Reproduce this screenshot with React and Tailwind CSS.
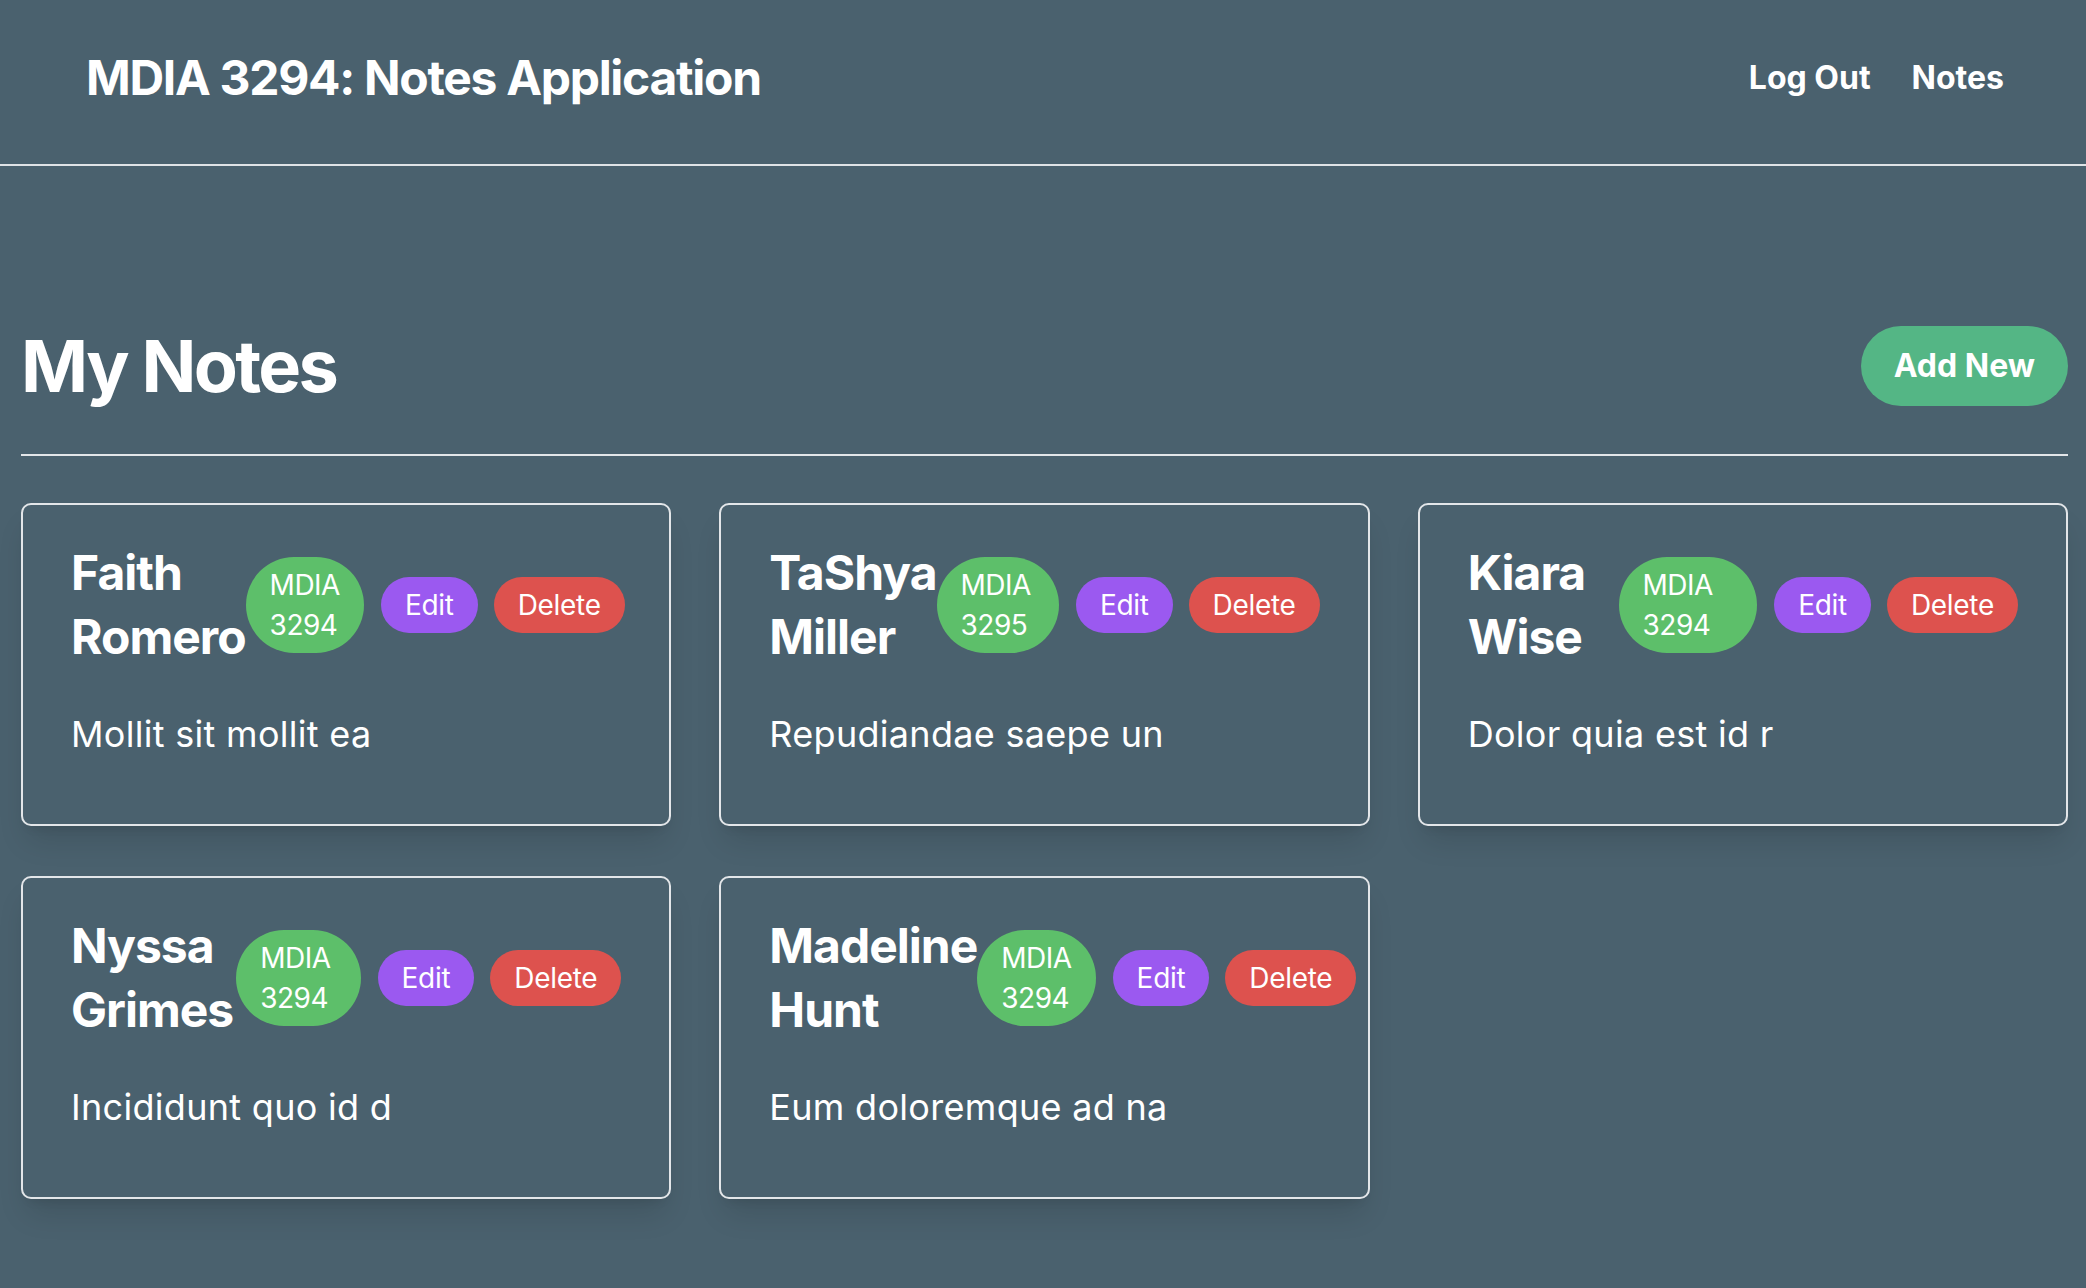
import React from "react";

const notes = [
  { first: "Faith", last: "Romero", course: "MDIA 3294", body: "Mollit sit mollit ea" },
  { first: "TaShya", last: "Miller", course: "MDIA 3295", body: "Repudiandae saepe un" },
  { first: "Kiara", last: "Wise", course: "MDIA 3294", body: "Dolor quia est id r" },
  { first: "Nyssa", last: "Grimes", course: "MDIA 3294", body: "Incididunt quo id d" },
  { first: "Madeline", last: "Hunt", course: "MDIA 3294", body: "Eum doloremque ad na" },
];

function NoteCard({ note }) {
  return (
    <div className="border-2 border-[#e3e6e9] rounded-[10px] pl-[48px] pr-[48px] pt-[36px] pb-[62px] shadow-[0_20px_30px_-6px_rgba(0,0,0,0.12),0_8px_12px_-8px_rgba(0,0,0,0.12)]">
      <div className="flex items-center">
        <h2 className="text-[48px] font-bold leading-[64px] tracking-[-1px] text-white">
          {note.first} {note.last}
        </h2>
        <span className="rounded-full bg-[#5dbf6a] px-[24px] py-[8px] text-[28px] leading-[40px] tracking-[-0.5px] text-white">
          {note.course}
        </span>
        <button className="ml-[17px] shrink-0 rounded-full bg-[#9b59f0] px-[24px] py-[8px] text-[28px] leading-[40px] tracking-[-0.3px] text-white">
          Edit
        </button>
        <button className="ml-[16px] shrink-0 rounded-full bg-[#dd524e] px-[24px] py-[8px] text-[28px] leading-[40px] tracking-[-0.3px] text-white">
          Delete
        </button>
      </div>
      <p className="mt-[37px] text-[36px] leading-[56px] tracking-[0.3px] text-white">{note.body}</p>
    </div>
  );
}

export default function App() {
  return (
    <div
      className="min-h-screen bg-[#4a616e] text-white"
      style={{ fontFamily: "Inter, 'Noto Sans', sans-serif" }}
    >
      <header className="flex h-[166px] items-center justify-between border-b-2 border-[#dfe3e6] pb-[8px] pl-[86px] pr-[82px]">
        <h1 className="text-[48px] font-bold leading-[64px] tracking-[-1.3px]">MDIA 3294: Notes Application</h1>
        <nav className="flex items-center gap-[41px] text-[32px] font-bold leading-[48px]">
          <a>Log Out</a>
          <a>Notes</a>
        </nav>
      </header>
      <main className="pl-[21px] pr-[18px] pt-[160px] pb-[80px]">
        <div className="flex items-center justify-between">
          <h2 className="text-[72px] font-bold leading-[80px] tracking-[-2.6px]">My Notes</h2>
          <button className="h-[80px] rounded-full bg-[#54b685] px-[33px] text-[32px] font-bold leading-[48px] text-white">
            Add New
          </button>
        </div>
        <hr className="mt-[48px] border-t-2 border-[#e3e6e9]" />
        <div className="mt-[47px] grid grid-cols-3 gap-x-[48px] gap-y-[50px]">
          {notes.map((n, i) => (
            <NoteCard key={i} note={n} />
          ))}
        </div>
      </main>
    </div>
  );
}
